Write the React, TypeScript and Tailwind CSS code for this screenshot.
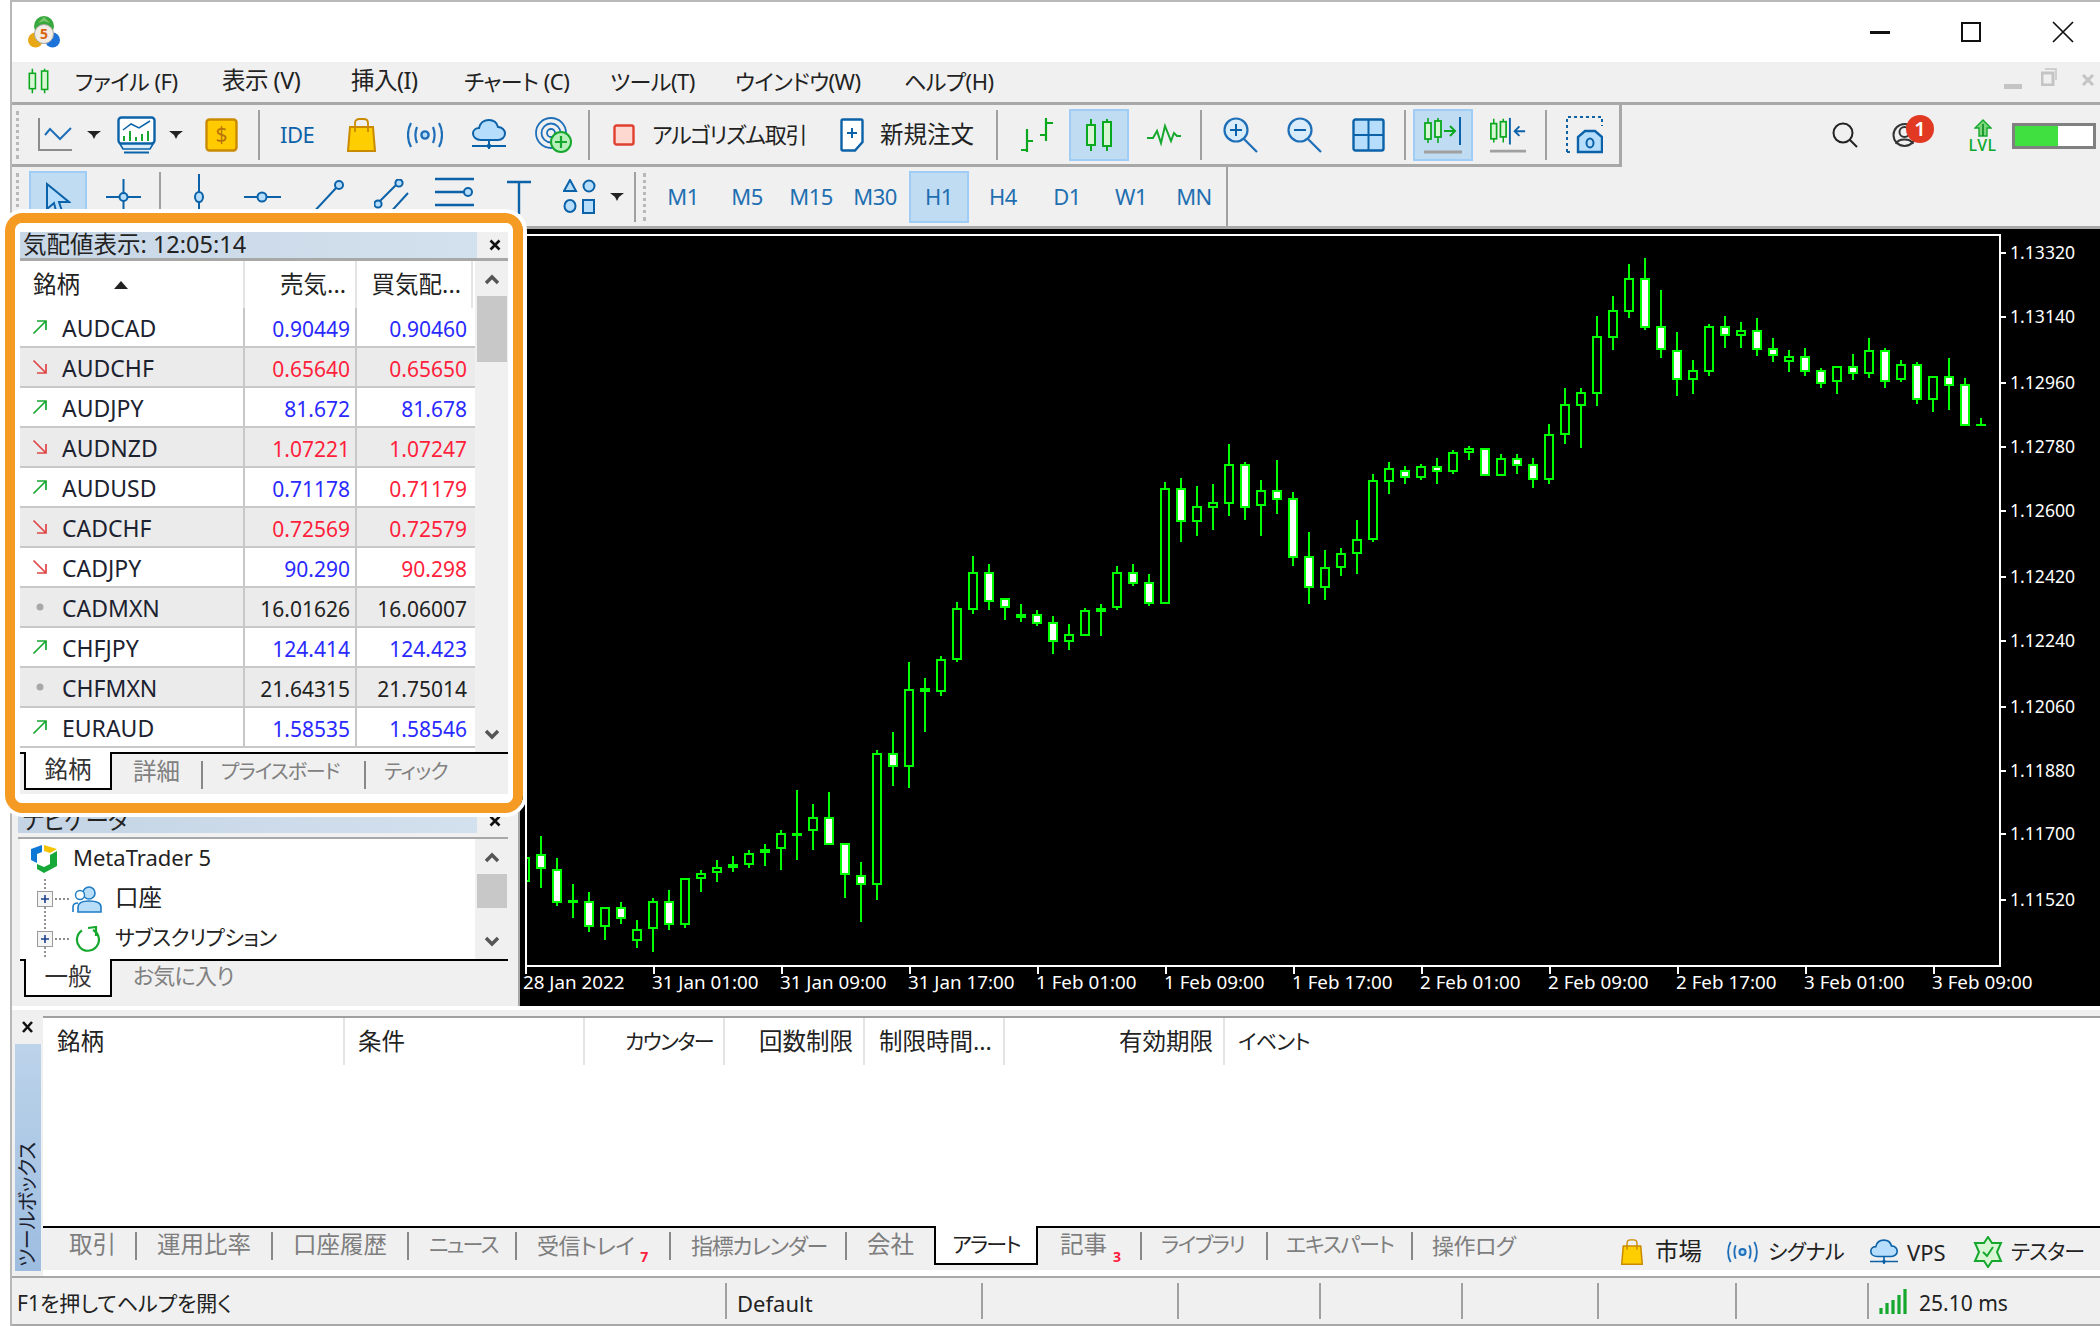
import React from "react";

const GREEN = "#16a82e";

type C = [number, number, number, number, string];
// wick top, wick bottom, body top, body bottom, type — sampled positions
const seg9: C[] = [
  [470,545,470,545,"h"],[408,563,463,508,"w"],[475,617,506,610,"w"],[552,653,601,610,"f"],[577,695,602,682,"w"],
  [620,719,620,682,"h"],[606,671,620,657,"w"],[660,743,686,724,"h"],[595,755,602,687,"h"],[570,690,602,676,"w"],
  [535,683,535,676,"h"],[510,575,518,538,"h"],[480,545,500,520,"h"],[468,515,492,503,"f"],[450,503,458,496,"h"],
  [432,497,446,460,"h"],[390,510,398,448,"h"],[270,480,398,401,"f"],[312,450,350,394,"h"],[276,436,350,436,"w"],
  [428,593,428,526,"w"],[486,665,524,556,"w"],[150,600,158,556,"h"],[96,258,158,202,"w"],
];
const seg7: C[] = [
  [1278,1398,1286,1385,"h"],[1116,1296,1135,1289,"h"],[978,1152,1027,1139,"h"],[1002,1140,1027,1115,"w"],[1105,1170,1105,1133,"w"],
  [1122,1176,1152,1164,"f"],[1140,1188,1152,1182,"w"],[1158,1272,1176,1236,"w"],[1182,1260,1212,1236,"h"],[1134,1218,1140,1217,"h"],
  [1122,1218,1134,1146,"f"],[1008,1140,1027,1133,"h"],[1002,1068,1027,1062,"w"],[1032,1128,1056,1122,"w"],[756,1122,775,1122,"h"],
  [744,936,775,876,"w"],[768,918,829,876,"h"],[762,900,817,833,"h"],[642,858,703,822,"h"],[696,870,703,834,"w"],
  [750,918,781,827,"h"],[690,852,781,810,"w"],[786,1008,805,984,"w"],[906,1122,979,1074,"w"],
];
const seg8: C[] = [
  [960,1110,1010,1073,"h"],[954,1038,968,1013,"h"],[870,1032,926,971,"h"],[732,936,751,930,"h"],[696,792,715,755,"h"],
  [708,762,721,743,"w"],[702,750,709,743,"h"],[684,762,709,725,"w"],[660,732,667,725,"h"],[648,690,655,670,"h"],
  [655,738,655,737,"w"],[672,738,685,737,"h"],[672,732,685,707,"w"],[684,774,703,749,"w"],[582,762,613,749,"h"],
  [474,642,523,616,"h"],[474,654,487,527,"h"],[258,528,319,491,"h"],[198,360,241,323,"h"],[102,264,145,245,"h"],
  [84,300,145,293,"w"],[180,384,289,359,"w"],[306,498,361,449,"w"],[390,492,421,449,"h"],[282,438,289,425,"h"],
  [258,354,289,317,"w"],[276,354,301,317,"h"],[264,378,301,359,"w"],[324,396,355,377,"w"],[360,426,379,395,"h"],
  [354,438,379,425,"w"],[414,474,421,461,"w"],[409,492,409,455,"h"],[372,450,409,431,"w"],[324,444,361,431,"h"],
  [354,474,361,455,"w"],[390,456,403,449,"h"],[396,522,403,509,"w"],[439,546,439,509,"h"],[384,540,439,467,"w"],
  [444,588,463,587,"w"],
];

function Candle({ x, c, base }: { x: number; c: C; base: number }) {
  const y = (p: number) => Math.round(base + p / 3);
  const [wt, wb, bt, bb, t] = c;
  const top = y(bt);
  const h = Math.max(y(bb) - top, 3);
  return (
    <g>
      <rect x={x - 1} y={y(wt)} width={2} height={y(wb) - y(wt)} fill="#00ff00" />
      <rect x={x - 5} y={top} width={10} height={h} fill="#00ff00" />
      {t !== "f" && h > 4 && (
        <rect x={x - 3} y={top + 2} width={6} height={h - 4} fill={t === "w" ? "#ffffff" : "#000000"} />
      )}
    </g>
  );
}

const priceLabels: [string, number][] = [
  ["1.13320", 253],["1.13140", 317],["1.12960", 383],["1.12780", 447],["1.12600", 511],["1.12420", 577],
  ["1.12240", 641],["1.12060", 707],["1.11880", 771],["1.11700", 834],["1.11520", 900],
];
const timeLabels = ["28 Jan 2022","31 Jan 01:00","31 Jan 09:00","31 Jan 17:00","1 Feb 01:00","1 Feb 09:00","1 Feb 17:00","2 Feb 01:00","2 Feb 09:00","2 Feb 17:00","3 Feb 01:00","3 Feb 09:00"];

function Chart() {
  return (
    <svg viewBox="520 229 1580 777" width={1580} height={777} className="block shrink-0 bg-black">
      <g shapeRendering="crispEdges">
        {seg9.map((c, i) => <Candle key={i} x={525 + 16 * i} c={c} base={700} />)}
        <rect x={908} y={662} width={2} height={126} fill="#00ff00" />
        <rect x={904} y={689} width={10} height={78} fill="#00ff00" />
        <rect x={906} y={691} width={6} height={74} fill="#000" />
        <rect x={924} y={678} width={2} height={54} fill="#00ff00" />
        <rect x={920} y={688} width={10} height={4} fill="#00ff00" />
        {seg7.map((c, i) => <Candle key={i} x={941 + 16 * i} c={c} base={230} />)}
        {seg8.map((c, i) => <Candle key={i} x={1325 + 16 * i} c={c} base={230} />)}
        <rect x={1980} y={418} width={2} height={7} fill="#00ff00" />
        <rect x={1976} y={424} width={10} height={2} fill="#00ff00" />
        <rect x={520} y={234} width={5} height={740} fill="#000" />
        <rect x={525} y={234} width={1476} height={2} fill="#fff" />
        <rect x={525} y={234} width={2} height={733} fill="#fff" />
        <rect x={1999} y={234} width={2} height={733} fill="#fff" />
        <rect x={525} y={965} width={1476} height={2} fill="#fff" />
        {priceLabels.map(([, y]) => <rect key={y} x={2001} y={y - 1} width={5} height={2} fill="#fff" />)}
        {timeLabels.map((_, i) => <rect key={i} x={525 + 128 * i} y={967} width={2} height={7} fill="#fff" />)}
      </g>
      <g fill="#ffffff">
        {priceLabels.map(([t, y]) => <text key={t} x={2010} y={y + 6} fontSize={17.6}>{t}</text>)}
        {timeLabels.map((t, i) => <text key={t} x={i === 0 ? 523 : 652 + 128 * (i - 1)} y={989} fontSize={18.8}>{t}</text>)}
      </g>
    </svg>
  );
}

function Logo() {
  return (
    <svg width={32} height={33} viewBox="0 0 32 33">
      <circle cx={16} cy={10} r={10} fill="#3aa83c" />
      <path d="M16 1L22 7L16 5L10 7Z" fill="#7bc96f" />
      <circle cx={7.5} cy={24} r={7.5} fill="#e8a815" />
      <circle cx={24.5} cy={24} r={7.5} fill="#1b72d8" />
      <circle cx={16} cy={18} r={9.5} fill="#f1ece4" stroke="#a8a8a8" strokeWidth={1} />
      <text x={16} y={23} textAnchor="middle" fontSize={14} fontWeight={700} fill="#d9660f">5</text>
    </svg>
  );
}

function Grip() {
  return <div className="w-[3px] h-[48px] ml-[4px] shrink-0 border-l-[3px] border-dotted border-[#b8b8b8]" />;
}
function Sep({ cls }: { cls: string }) {
  return <div className={`w-[2px] h-[50px] shrink-0 bg-[#a0a0a0] ${cls}`} />;
}
function Caret({ cls }: { cls: string }) {
  return (
    <svg width={14} height={10} viewBox="0 0 14 10" className={`shrink-0 ${cls}`}>
      <path d="M0 1H14L9 5L7 9L5 5Z" fill="#222" />
    </svg>
  );
}

const Candles = ({ w = 30, h = 34 }: { w?: number; h?: number }) => (
  <svg width={w} height={h} viewBox="0 0 30 34" className="shrink-0">
    <path d="M7 1V33M23 1V33" stroke="#0aa81e" strokeWidth={2} />
    <rect x={3} y={7} width={8} height={20} fill="#d8f5d4" stroke="#0aa81e" strokeWidth={2} />
    <rect x={19} y={4} width={8} height={24} fill="#d8f5d4" stroke="#0aa81e" strokeWidth={2} />
  </svg>
);

function UpDot({ d }: { d: string }) {
  if (d === "u")
    return (
      <svg width={16} height={16} viewBox="0 0 16 16" className="shrink-0">
        <path d="M1.5 14.5L14 2M5 2H14V11" stroke="#16a82e" strokeWidth={1.7} fill="none" />
      </svg>
    );
  if (d === "d")
    return (
      <svg width={16} height={16} viewBox="0 0 16 16" className="shrink-0">
        <path d="M1.5 1.5L14 14M5 14H14V5" stroke="#e04646" strokeWidth={1.7} fill="none" />
      </svg>
    );
  return (
    <svg width={16} height={16} viewBox="0 0 16 16" className="shrink-0">
      <circle cx={8} cy={8} r={3.5} fill="#a8a8a8" />
    </svg>
  );
}

const Chevron = ({ down }: { down?: boolean }) => (
  <svg width={16} height={12} viewBox="0 0 16 12">
    <path d={down ? "M2 2L8 8L14 2" : "M2 10L8 4L14 10"} stroke="#555" strokeWidth={3.4} fill="none" />
  </svg>
);

const B = "#2a2aff";
const R = "#ff1f3d";
const K = "#222222";
const rows = [
  ["u","AUDCAD","0.90449","0.90460",B,B],
  ["d","AUDCHF","0.65640","0.65650",R,R],
  ["u","AUDJPY","81.672","81.678",B,B],
  ["d","AUDNZD","1.07221","1.07247",R,R],
  ["u","AUDUSD","0.71178","0.71179",B,R],
  ["d","CADCHF","0.72569","0.72579",R,R],
  ["d","CADJPY","90.290","90.298",B,R],
  ["n","CADMXN","16.01626","16.06007",K,K],
  ["u","CHFJPY","124.414","124.423",B,B],
  ["n","CHFMXN","21.64315","21.75014",K,K],
  ["u","EURAUD","1.58535","1.58546",B,B],
];

function PanelClose() {
  return (
    <div className="w-[26px] ml-[5px] flex justify-center">
      <svg width={12} height={12} viewBox="0 0 12 12">
        <path d="M1.5 1.5L10.5 10.5M10.5 1.5L1.5 10.5" stroke="#111" strokeWidth={2.6} />
      </svg>
    </div>
  );
}

function MarketWatch() {
  return (
    <div className="ml-[8px] w-[488px] shrink-0 pt-[3px]">
      <div className="flex h-[26px] items-center">
        <div className="w-[462px] h-full flex items-center pl-[3px] bg-gradient-to-r from-[#c8d7e6] to-[#d3e0ee] text-[23.5px] leading-none text-[#222] whitespace-nowrap">
          気配値表示: 12:05:14
        </div>
        <PanelClose />
      </div>
      <div className="h-[3px] bg-[#a8a8a8]" />
      <div className="flex h-[491px] bg-white">
        <div className="w-[455px]">
          <div className="grid grid-cols-[225px_112px_116px] h-[47px] text-[23.5px] text-[#222]">
            <div className="flex items-center pl-[13px] border-r-2 border-[#e4e4e4]">
              銘柄
              <svg width={14} height={8} viewBox="0 0 14 8" className="ml-[34px]"><path d="M0 8H14L7 0Z" fill="#222" /></svg>
            </div>
            <div className="flex items-center justify-end pr-[9px] border-r-2 border-[#e4e4e4]">売気...</div>
            <div className="flex items-center justify-end pr-[10px] border-r-2 border-[#e4e4e4]">買気配...</div>
          </div>
          {rows.map((r, i) => (
            <div
              key={r[1]}
              className={`grid grid-cols-[225px_112px_116px] h-[40px] border-b-2 border-[#c8c8c8] ${i % 2 ? "bg-[#ebebeb]" : "bg-white"}`}
            >
              <div className="flex items-center pl-[12px] border-r-2 border-[#c8c8c8] text-[23px] text-[#1c2230]">
                <UpDot d={r[0]} />
                <span className="ml-[14px] pt-[3px]">{r[1]}</span>
              </div>
              <div className="flex items-center justify-end pr-[5px] pt-[6px] border-r-2 border-[#c8c8c8] text-[21px]">
                <span style={{ color: r[4] }}>{r[2]}</span>
              </div>
              <div className="flex items-center justify-end pr-[6px] pt-[6px] text-[21px]">
                <span style={{ color: r[5] }}>{r[3]}</span>
              </div>
            </div>
          ))}
        </div>
        <div className="w-[33px] bg-[#f0f0f0] flex flex-col items-center">
          <div className="h-[35px] flex items-center justify-center"><Chevron /></div>
          <div className="w-[30px] h-[66px] bg-[#c8c8c8]" />
          <div className="mt-auto h-[42px] flex items-start pt-[19px]"><Chevron down /></div>
        </div>
      </div>
      <div className="h-[2px] bg-black" />
      <div className="flex h-[41px] bg-[#f0f0f0] text-[23.5px] text-[#808080]">
        <div className="ml-[4px] w-[88px] h-[38px] -mt-[2px] bg-white border-2 border-t-0 border-black flex items-center justify-center text-[#333]">銘柄</div>
        <div className="flex items-center">
          <span className="w-[46px] ml-[21px] -mt-[6px] whitespace-nowrap">詳細</span>
          <span className="w-[2px] h-[28px] bg-[#888] ml-[22px]" />
          <span className="w-[124px] ml-[18px] -mt-[6px] whitespace-nowrap text-[20px] tracking-[-1px]">プライスボード</span>
          <span className="w-[2px] h-[28px] bg-[#888] ml-[19px]" />
          <span className="ml-[18px] -mt-[6px] text-[20px] tracking-[-0.5px]">ティック</span>
        </div>
      </div>
    </div>
  );
}

function Navigator() {
  return (
    <div className="mt-[13px] ml-[6px] w-[490px] shrink-0">
      <div className="flex h-[25px] items-center">
        <div className="w-[464px] h-full pl-[4px] flex items-center bg-gradient-to-r from-[#c4d4e4] to-[#d3e0ee] text-[23.5px] leading-none tracking-[-1px] text-[#222]">ナビゲータ</div>
        <PanelClose />
      </div>
      <div className="h-[4px]" />
      <div className="h-[2px] bg-[#a8a8a8]" />
      <div className="flex h-[120px] bg-white ml-[2px]">
        <div className="flex-1 text-[#222]">
          <div className="h-[40px] flex items-center pl-[10px]">
            <svg width={28} height={30} viewBox="0 0 28 30" className="shrink-0">
              <path d="M1 5L12 1V8L7 10V19L1 16Z" fill="#0e78d6" />
              <path d="M14 1L27 5L20 9L14 7Z" fill="#f5c400" />
              <path d="M27 7V22L14 29L7 25V20L14 23L20 20V11Z" fill="#17a83a" />
            </svg>
            <span className="ml-[15px] pb-[4px] text-[22px]">MetaTrader 5</span>
          </div>
          <div className="h-[40px] flex items-center pl-[17px]">
            <TreeNode />
            <svg width={30} height={28} viewBox="0 0 30 28" className="ml-[3px] shrink-0">
              <circle cx={17} cy={8} r={6} fill="#b8ddf8" stroke="#1f7cc4" strokeWidth={1.6} />
              <path d="M6 27V22C6 17 11 16 17 16C24 16 29 17 29 22V27Z" fill="#b8ddf8" stroke="#1f7cc4" strokeWidth={1.6} />
              <circle cx={8} cy={10} r={4.5} fill="#fff" stroke="#1f7cc4" strokeWidth={1.4} />
              <path d="M1 27V22C1 19 3 18 6 18" fill="none" stroke="#1f7cc4" strokeWidth={1.6} />
            </svg>
            <span className="ml-[13px] pb-[3px] text-[23.5px]">口座</span>
          </div>
          <div className="h-[40px] flex items-center pl-[17px]">
            <TreeNode />
            <svg width={26} height={26} viewBox="0 0 26 26" className="ml-[5px] shrink-0">
              <path d="M8 4.5A11 11 0 1 0 19 4" fill="none" stroke="#16a82e" strokeWidth={2.2} />
              <path d="M14 2L22 1V10" fill="none" stroke="#16a82e" strokeWidth={2.2} />
            </svg>
            <span className="ml-[15px] pb-[3px] text-[21px] tracking-[-0.5px] whitespace-nowrap">サブスクリプション</span>
          </div>
        </div>
        <div className="w-[33px] bg-[#f0f0f0] flex flex-col items-center">
          <div className="h-[35px] flex items-center justify-center"><Chevron /></div>
          <div className="w-[30px] h-[34px] bg-[#c8c8c8]" />
          <div className="mt-auto h-[34px] flex items-center"><Chevron down /></div>
        </div>
      </div>
      <div className="h-[2px] bg-black ml-[2px]" />
      <div className="flex h-[41px] bg-[#f0f0f0] text-[23.5px] text-[#808080]">
        <div className="ml-[6px] w-[88px] h-[38px] -mt-[2px] bg-white border-2 border-t-0 border-black flex items-center justify-center text-[#333]">一般</div>
        <div className="flex items-center ml-[21px] pb-[12px] text-[22px] tracking-[-0.8px]">お気に入り</div>
      </div>
    </div>
  );
}

function TreeNode() {
  return (
    <svg width={32} height={40} viewBox="0 0 32 40" className="shrink-0">
      <path d="M8 0V12M8 28V40" stroke="#666" strokeWidth={1.4} strokeDasharray="2 2" />
      <path d="M18 20H32" stroke="#666" strokeWidth={1.4} strokeDasharray="2 2" />
      <rect x={0.5} y={12.5} width={15} height={15} fill="#f4f4f4" stroke="#9a9a9a" />
      <path d="M4 20H12M8 16V24" stroke="#1c3f8f" strokeWidth={1.6} />
    </svg>
  );
}

const tabs = [
  { l: "取引", c: "w-[92px] pl-[26px] text-[23.5px]" },
  { l: "運用比率", c: "w-[134px] pl-[20px] text-[23.5px]" },
  { l: "口座履歴", c: "w-[134px] pl-[20px] text-[23.5px]" },
  { l: "ニュース", c: "w-[106px] pl-[20px] tracking-[-1.7px]" },
  { l: "受信トレイ", c: "w-[152px] pl-[20px] text-[22px] tracking-[-0.5px]", n: "7" },
  { l: "指標カレンダー", c: "w-[174px] pl-[20px] text-[22px] tracking-[-1.3px]" },
];
const tabs2 = [
  { l: "記事", c: "w-[102px] pl-[22px] text-[23.5px]", n: "3" },
  { l: "ライブラリ", c: "w-[124px] pl-[19px] tracking-[-1.4px]" },
  { l: "エキスパート", c: "w-[143px] pl-[18px] tracking-[-1.2px]" },
  { l: "操作ログ", c: "w-[208px] pl-[19px] text-[22px] tracking-[-0.5px]", last: true },
];

function Tab({ t }: { t: { l: string; c: string; n?: string; last?: boolean } }) {
  return (
    <>
      <div className={`flex items-center h-full pb-[8px] whitespace-nowrap shrink-0 ${t.c}`}>
        {t.l}
        {t.n && <span className="relative top-[11px] ml-[6px] text-[14px] font-bold text-[#ff2040] tracking-normal">{t.n}</span>}
      </div>
      {!t.last && <div className="w-[2px] h-[28px] -mt-[6px] bg-[#888] shrink-0" />}
    </>
  );
}

const Bag = ({ w, h }: { w: number; h: number }) => (
  <svg width={w} height={h} viewBox="0 0 29 34" className="shrink-0">
    <path d="M3 9H26L28 33H1Z" fill="#ffce00" stroke="#c98a00" strokeWidth={2} />
    <path d="M8 14V5C8 2 10 1 12.5 1H16.5C19 1 21 2 21 5V14" fill="none" stroke="#c98a00" strokeWidth={1.8} />
  </svg>
);
const Signal = ({ w, h }: { w: number; h: number }) => (
  <svg width={w} height={h} viewBox="0 0 36 26" className="shrink-0" fill="none" stroke="#1f6fb8" strokeWidth={2.2}>
    <circle cx={18} cy={13} r={3.6} fill="#b6defc" strokeWidth={2.4} />
    <path d="M10 5C8 10 8 16 10 21M26 5C28 10 28 16 26 21M4 1C0 8 0 18 4 25M32 1C36 8 36 18 32 25" />
  </svg>
);
const Cloud = ({ w, h }: { w: number; h: number }) => (
  <svg width={w} height={h} viewBox="0 0 34 31" className="shrink-0">
    <path d="M9 21C4 21 1 18 1 14.5C1 11 4 9 7 9C8 4 12 1 17 1C22 1 25 4 26 8C30 8 33 11 33 14.5C33 18 30 21 26 21Z" fill="#b6defc" stroke="#0b62a8" strokeWidth={2} />
    <path d="M17 21V30M0 27H34" stroke="#0b62a8" strokeWidth={2} />
    <circle cx={17} cy={27} r={2.2} fill="#0b62a8" />
  </svg>
);

export default function App() {
  return (
    <div className="relative w-[2100px] h-[1326px] overflow-hidden bg-white font-['Noto_Sans','Noto_Sans_CJK_JP',sans-serif] [font-feature-settings:'palt']">
      <div className="ml-[10px] w-[2090px] h-[1326px] border-l-2 border-t-2 border-[#b8b8b8] flex flex-col">
        {/* Title */}
        <div className="h-[60px] flex items-center shrink-0 bg-white">
          <div className="ml-[16px]"><Logo /></div>
          <svg width={20} height={3} className="ml-[1810px]"><rect width={20} height={3} fill="#111" /></svg>
          <svg width={20} height={20} viewBox="0 0 20 20" className="ml-[71px]"><rect x={1} y={1} width={18} height={18} fill="none" stroke="#111" strokeWidth={2} /></svg>
          <svg width={22} height={22} viewBox="0 0 22 22" className="ml-[71px]"><path d="M1 1L21 21M21 1L1 21" stroke="#111" strokeWidth={1.7} /></svg>
        </div>
        {/* Menu */}
        <div className="h-[43px] pb-[2px] shrink-0 bg-[#f0f0f0] border-b-[3px] border-[#a8a8a8] flex items-center text-[22px] text-[#222] tracking-[-0.5px]">
          <div className="ml-[15px] w-[23px] shrink-0"><Candles w={23} h={30} /></div>
          <span className="ml-[25px] w-[147px] shrink-0 whitespace-nowrap">ファイル (F)</span>
          <span className="w-[129px] shrink-0 whitespace-nowrap text-[23.5px]">表示 (V)</span>
          <span className="w-[113px] shrink-0 whitespace-nowrap text-[23.5px]">挿入(I)</span>
          <span className="w-[146px] shrink-0 whitespace-nowrap">チャート (C)</span>
          <span className="w-[125px] shrink-0 whitespace-nowrap">ツール(T)</span>
          <span className="w-[169px] shrink-0 whitespace-nowrap">ウインドウ(W)</span>
          <span className="w-[100px] shrink-0 whitespace-nowrap">ヘルプ(H)</span>
          <svg width={18} height={6} className="ml-[1000px] mt-[12px]"><rect width={18} height={5} fill="#c4c4c4" /></svg>
          <svg width={16} height={18} viewBox="0 0 16 18" className="ml-[19px] -mt-[8px]"><rect x={1} y={5} width={11} height={12} fill="none" stroke="#c4c4c4" strokeWidth={3} /><path d="M4 1H15V12" fill="none" stroke="#c4c4c4" strokeWidth={1.5} /></svg>
          <svg width={14} height={14} viewBox="0 0 14 14" className="ml-[24px] -mt-[2px]"><path d="M2 2L12 12M12 2L2 12" stroke="#c4c4c4" strokeWidth={3} /></svg>
        </div>
        {/* Toolbar 1 */}
        <div className="h-[62px] shrink-0 bg-[#f0f0f0] flex">
          <div className="w-[1610px] h-full shrink-0 border-r-[3px] border-b-[3px] border-[#a8a8a8] flex items-center">
            <Grip />
            <svg width={34} height={33} viewBox="0 0 34 33" className="ml-[19px] shrink-0">
              <path d="M1 0V32H34" fill="none" stroke="#8c8c8c" strokeWidth={2} />
              <path d="M7 17L12 11L22 21L33 10" fill="none" stroke="#1f6fb8" strokeWidth={2} />
            </svg>
            <Caret cls="ml-[15px]" />
            <svg width={39} height={38} viewBox="0 0 39 38" className="ml-[16px] shrink-0">
              <rect x={1.5} y={1.5} width={36} height={26} rx={3} fill="#fff" stroke="#0b62a8" strokeWidth={2.4} />
              <path d="M6 14L14 8L22 12L33 5" fill="none" stroke="#0b62a8" strokeWidth={1.5} />
              <path d="M7 25V20M13 25V15M19 25V21M25 25V18M31 25V15" stroke="#16a82e" strokeWidth={2} />
              <path d="M3 28H36L33 33H6Z" fill="#d8ecfb" stroke="#0b62a8" strokeWidth={1.6} />
              <path d="M7 36.5H32" stroke="#0b62a8" strokeWidth={2} />
            </svg>
            <Caret cls="ml-[13px]" />
            <svg width={33} height={34} viewBox="0 0 33 34" className="ml-[22px] shrink-0">
              <rect x={1.5} y={1.5} width={30} height={31} rx={3} fill="#ffcb00" stroke="#c98a00" strokeWidth={2.4} />
              <text x={16.5} y={24} textAnchor="middle" fontSize={21} fill="#b8740a">$</text>
            </svg>
            <Sep cls="ml-[20px]" />
            <span className="ml-[20px] w-[35px] shrink-0 text-[22px] text-[#0b62a8] tracking-[-0.5px]">IDE</span>
            <div className="ml-[32px]"><Bag w={29} h={34} /></div>
            <div className="ml-[31px]"><Signal w={36} h={26} /></div>
            <div className="ml-[29px]"><Cloud w={34} h={31} /></div>
            <svg width={37} height={36} viewBox="0 0 37 36" className="ml-[29px] shrink-0">
              <g fill="none" stroke="#1f6fb8" strokeWidth={1.8}>
                <circle cx={16} cy={16} r={15} />
                <circle cx={16} cy={16} r={9.5} />
                <circle cx={16} cy={16} r={4} />
              </g>
              <circle cx={26} cy={25} r={10} fill="#b7f0bb" stroke="#16a82e" strokeWidth={2} />
              <path d="M20 25H32M26 19V31" stroke="#16a82e" strokeWidth={2.2} />
            </svg>
            <Sep cls="ml-[16px]" />
            <svg width={22} height={22} viewBox="0 0 22 22" className="ml-[23px] shrink-0"><rect x={1.5} y={1.5} width={19} height={19} rx={2} fill="#fcd8d0" stroke="#e0402f" strokeWidth={2.4} /></svg>
            <span className="ml-[17px] w-[152px] shrink-0 text-[22px] text-[#222] whitespace-nowrap tracking-[-1.2px]">アルゴリズム取引</span>
            <svg width={24} height={34} viewBox="0 0 24 34" className="ml-[36px] shrink-0">
              <path d="M3 1.5H21C22 1.5 22.5 2 22.5 3V24L15 32.5H3C2 32.5 1.5 32 1.5 31V3C1.5 2 2 1.5 3 1.5Z" fill="#fff" stroke="#0b62a8" strokeWidth={2.4} />
              <path d="M7 15H17M12 10V20" stroke="#0b62a8" strokeWidth={2} />
            </svg>
            <span className="ml-[16px] w-[95px] shrink-0 text-[23.5px] text-[#222] whitespace-nowrap">新規注文</span>
            <Sep cls="ml-[21px]" />
            <svg width={37} height={36} viewBox="0 0 37 36" className="ml-[20px] shrink-0">
              <path d="M9 12V35M9 24H15M9 33H3M28 1V24M28 6H35M28 18H22" stroke="#0aa81e" strokeWidth={2.2} fill="none" />
            </svg>
            <div className="ml-[14px] w-[60px] h-[52px] shrink-0 bg-[#c0dcf3] border-2 border-[#a0cdf5] flex items-center justify-center"><Candles /></div>
            <svg width={34} height={24} viewBox="0 0 34 24" className="ml-[18px] shrink-0">
              <path d="M0 15H6L10 8L14 20L18 3L24 18L27 10L30 13H34" fill="none" stroke="#16a82e" strokeWidth={2} />
            </svg>
            <Sep cls="ml-[19px]" />
            <svg width={35} height={36} viewBox="0 0 35 36" className="ml-[21px] shrink-0">
              <circle cx={13} cy={13} r={11.5} fill="#d8ecfb" stroke="#1f6fb8" strokeWidth={2.2} />
              <path d="M21 22L34 35" stroke="#1f6fb8" strokeWidth={2.2} />
              <path d="M7 13H19M13 7V19" stroke="#0b62a8" strokeWidth={2} />
            </svg>
            <svg width={35} height={36} viewBox="0 0 35 36" className="ml-[29px] shrink-0">
              <circle cx={13} cy={13} r={11.5} fill="#d8ecfb" stroke="#1f6fb8" strokeWidth={2.2} />
              <path d="M21 22L34 35" stroke="#1f6fb8" strokeWidth={2.2} />
              <path d="M7 13H19" stroke="#0b62a8" strokeWidth={2} />
            </svg>
            <svg width={33} height={34} viewBox="0 0 33 34" className="ml-[30px] shrink-0">
              <rect x={1.5} y={1.5} width={30} height={31} rx={2} fill="#b6defc" stroke="#0b62a8" strokeWidth={2.4} />
              <path d="M16.5 2V32M2 17H31" stroke="#0b62a8" strokeWidth={2} />
            </svg>
            <Sep cls="ml-[19px]" />
            <div className="ml-[7px] w-[60px] h-[52px] shrink-0 bg-[#c0dcf3] border-2 border-[#a0cdf5] flex items-center justify-center">
              <svg width={40} height={40} viewBox="0 0 40 40">
                <path d="M5 3V28M15 3V28" stroke="#0aa81e" strokeWidth={1.6} />
                <rect x={2} y={8} width={6} height={16} fill="#d8f5d4" stroke="#0aa81e" strokeWidth={1.8} />
                <rect x={12} y={6} width={6} height={16} fill="#d8f5d4" stroke="#0aa81e" strokeWidth={1.8} />
                <path d="M21 16H32M27 11L32 16L27 21" fill="none" stroke="#0aa81e" strokeWidth={2} />
                <path d="M37 2V30" stroke="#0b62a8" strokeWidth={2} />
                <path d="M1 37H39" stroke="#a0a0a0" strokeWidth={3} />
              </svg>
            </div>
            <svg width={38} height={40} viewBox="0 0 40 40" className="ml-[16px] shrink-0">
              <path d="M5 3V28M15 3V28" stroke="#0aa81e" strokeWidth={1.6} />
              <rect x={2} y={8} width={6} height={16} fill="#d8f5d4" stroke="#0aa81e" strokeWidth={1.8} />
              <rect x={12} y={6} width={6} height={16} fill="#d8f5d4" stroke="#0aa81e" strokeWidth={1.8} />
              <path d="M22 2V30" stroke="#0b62a8" strokeWidth={2} />
              <path d="M38 16H27M32 11L27 16L32 21" fill="none" stroke="#0b62a8" strokeWidth={2} />
              <path d="M1 37H39" stroke="#a0a0a0" strokeWidth={3} />
            </svg>
            <Sep cls="ml-[18px]" />
            <svg width={37} height={38} viewBox="0 0 37 38" className="ml-[19px] shrink-0">
              <path d="M1 36V1H36V10M1 36H4" fill="none" stroke="#0b62a8" strokeWidth={2} strokeDasharray="3 3" />
              <path d="M12 36V21L19 15H29L36 21V36Z" fill="#b6defc" stroke="#0b62a8" strokeWidth={2.4} />
              <ellipse cx={24} cy={27} rx={3.5} ry={4.5} fill="none" stroke="#0b62a8" strokeWidth={2} />
            </svg>
          </div>
          <div className="flex items-center h-[60px] ml-[210px]">
            <svg width={26} height={26} viewBox="0 0 26 26" className="shrink-0">
              <circle cx={11} cy={11} r={9.5} fill="none" stroke="#222" strokeWidth={2} />
              <path d="M18 18L25 25" stroke="#222" strokeWidth={2} />
            </svg>
            <div className="relative ml-[34px] w-[25px] h-[26px] shrink-0">
              <svg width={25} height={26} viewBox="0 0 25 26">
                <circle cx={12.5} cy={13} r={11} fill="none" stroke="#333" strokeWidth={2} />
                <circle cx={12.5} cy={10} r={5} fill="none" stroke="#333" strokeWidth={2} />
                <path d="M4 22C6 16 19 16 21 22" fill="none" stroke="#333" strokeWidth={2} />
              </svg>
              <div className="absolute left-[14px] -top-[7px] w-[28px] h-[28px] rounded-full bg-[#e23a22] text-white text-[20px] font-semibold flex items-center justify-center">1</div>
            </div>
            <div className="ml-[53px] w-[25px] shrink-0 flex flex-col items-center text-[#0aa82a]">
              <svg width={18} height={18} viewBox="0 0 18 18">
                <path d="M9 1L17 9H13V17H5V9H1Z" fill="#7cd67c" stroke="#16a82e" strokeWidth={1.4} />
                <path d="M9 5V17" stroke="#0a8a20" strokeWidth={1.6} />
              </svg>
              <span className="text-[16px] leading-[14px] font-medium mt-[1px] tracking-[0.5px]">LVL</span>
            </div>
            <div className="ml-[17px] mt-[2px] w-[84px] h-[26px] shrink-0 border-[3px] border-[#808080] bg-white flex">
              <div className="w-[43px] h-full bg-[#40e040]" />
            </div>
          </div>
        </div>
        {/* Toolbar 2 */}
        <div className="h-[62px] shrink-0 bg-[#f0f0f0] border-b-[3px] border-[#a8a8a8] flex items-center">
          <Grip />
          <div className="ml-[10px] w-[58px] h-[52px] shrink-0 bg-[#c0dcf3] border-2 border-[#a0cdf5] flex items-start justify-center pt-[9px]">
            <svg width={26} height={34} viewBox="0 0 26 34"><path d="M2 2L24 20H14L18 32L12 33L9 21L2 27Z" fill="#b6defc" stroke="#0b62a8" strokeWidth={2} /></svg>
          </div>
          <svg width={35} height={36} viewBox="0 0 35 36" className="ml-[19px] shrink-0">
            <path d="M17.5 0V36M0 18H35" stroke="#0b62a8" strokeWidth={2} />
            <circle cx={17.5} cy={18} r={4} fill="#b6defc" stroke="#0b62a8" strokeWidth={2} />
          </svg>
          <Sep cls="ml-[18px]" />
          <svg width={14} height={46} viewBox="0 0 14 46" className="ml-[31px] shrink-0">
            <path d="M7 0V46" stroke="#0b62a8" strokeWidth={2} />
            <ellipse cx={7} cy={23} rx={4} ry={5} fill="#b6defc" stroke="#0b62a8" strokeWidth={2} />
          </svg>
          <svg width={37} height={14} viewBox="0 0 37 14" className="ml-[38px] shrink-0">
            <path d="M0 7H37" stroke="#0b62a8" strokeWidth={2} />
            <circle cx={18} cy={7} r={4.5} fill="#b6defc" stroke="#0b62a8" strokeWidth={2} />
          </svg>
          <svg width={36} height={36} viewBox="0 0 36 36" className="ml-[28px] shrink-0">
            <path d="M2 36L28 8" stroke="#0b62a8" strokeWidth={2} />
            <circle cx={30} cy={6} r={4} fill="#b6defc" stroke="#0b62a8" strokeWidth={2} />
          </svg>
          <svg width={36} height={36} viewBox="0 0 36 36" className="ml-[29px] shrink-0">
            <path d="M6 22L22 6M14 36L34 14" stroke="#0b62a8" strokeWidth={2} />
            <circle cx={25} cy={4} r={3.6} fill="#b6defc" stroke="#0b62a8" strokeWidth={2} />
            <circle cx={4} cy={25} r={3.6} fill="#b6defc" stroke="#0b62a8" strokeWidth={2} />
          </svg>
          <svg width={39} height={40} viewBox="0 0 39 40" className="ml-[25px] shrink-0">
            <path d="M0 2H39M0 15H30M0 28H39M0 39H6" stroke="#0b62a8" strokeWidth={2.4} />
            <circle cx={33} cy={15} r={4} fill="#b6defc" stroke="#0b62a8" strokeWidth={2} />
          </svg>
          <svg width={24} height={34} viewBox="0 0 24 34" className="ml-[33px] shrink-0"><path d="M0 2H24M12 2V34" stroke="#0b62a8" strokeWidth={2.4} /></svg>
          <svg width={33} height={36} viewBox="0 0 33 36" className="ml-[32px] shrink-0">
            <g fill="#b6defc" stroke="#0b62a8" strokeWidth={2}>
              <path d="M7 1L13 12H1Z" />
              <circle cx={26} cy={7} r={5.5} />
              <ellipse cx={7} cy={27} rx={5.5} ry={6} />
              <rect x={20} y={21} width={11} height={13} />
            </g>
          </svg>
          <Caret cls="ml-[14px]" />
          <Sep cls="ml-[10px]" />
          <div className="w-[3px] h-[48px] ml-[7px] shrink-0 border-l-[3px] border-dotted border-[#b8b8b8]" />
          <div className="flex ml-[5px] w-[577px] h-[59px] items-center border-r-2 border-[#a0a0a0] text-[22px] text-[#1f6fb0] tracking-[-0.5px]">
            <span className="w-[64px] text-center">M1</span>
            <span className="w-[64px] text-center">M5</span>
            <span className="w-[64px] text-center">M15</span>
            <span className="w-[64px] text-center">M30</span>
            <span className="w-[60px] mx-[2px] h-[52px] flex items-center justify-center bg-[#c0dcf3] border-2 border-[#a0cdf5]">H1</span>
            <span className="w-[64px] text-center">H4</span>
            <span className="w-[64px] text-center">D1</span>
            <span className="w-[64px] text-center">W1</span>
            <span className="w-[62px] text-center">MN</span>
          </div>
        </div>
        {/* Main */}
        <div className="h-[777px] shrink-0 flex bg-black">
          <div className="w-[508px] shrink-0 bg-[#f0f0f0] border-r-2 border-[#a8a8a8] flex flex-col">
            <MarketWatch />
            <Navigator />
          </div>
          <Chart />
        </div>
        {/* Toolbox */}
        <div className="h-[270px] shrink-0 flex bg-[#f0f0f0] border-t-[4px] border-white">
          <div className="w-[31px] shrink-0 flex flex-col items-center">
            <div className="h-[34px] flex items-start pt-[10px]">
              <svg width={13} height={14} viewBox="0 0 13 14"><path d="M2 2L11 12M11 2L2 12" stroke="#111" strokeWidth={2.6} /></svg>
            </div>
            <div className="w-[26px] h-[227px] bg-gradient-to-b from-[#bcd3ea] to-[#9dbde0] flex items-end justify-center">
              <span className="[writing-mode:vertical-rl] [text-orientation:sideways] rotate-180 text-[20px] leading-[26px] text-[#1c2230] whitespace-nowrap pt-[4px] tracking-[-0.3px]">ツールボックス</span>
            </div>
          </div>
          <div className="flex-1 flex flex-col">
            <div className="h-[6px]" />
            <div className="h-[2px] bg-[#a0a0a0]" />
            <div className="h-[208px] bg-white text-[23.5px] text-[#222] whitespace-nowrap">
              <div className="flex h-[47px]">
                <div className="w-[302px] border-r-2 border-[#e4e4e4] pl-[14px] flex items-center">銘柄</div>
                <div className="w-[240px] border-r-2 border-[#e4e4e4] pl-[13px] flex items-center">条件</div>
                <div className="w-[140px] border-r-2 border-[#e4e4e4] pr-[10px] flex items-center justify-end text-[21px] tracking-[-1.6px]">カウンター</div>
                <div className="w-[140px] border-r-2 border-[#e4e4e4] pr-[10px] flex items-center justify-end">回数制限</div>
                <div className="w-[140px] border-r-2 border-[#e4e4e4] pl-[14px] flex items-center">制限時間...</div>
                <div className="w-[220px] border-r-2 border-[#e4e4e4] pr-[10px] flex items-center justify-end">有効期限</div>
                <div className="pl-[13px] flex items-center text-[21px] tracking-[-0.7px]">イベント</div>
              </div>
            </div>
            <div className="h-[2px] bg-black" />
            <div className="h-[42px] flex items-center text-[21px] text-[#7e7e7e]">
              {tabs.map((t) => <Tab key={t.l} t={t} />)}
              <div className="flex items-center h-full pb-[8px] w-[87px] pl-[20px] shrink-0 whitespace-nowrap text-[23.5px]">会社</div>
              <div className="w-[104px] h-[39px] self-start -mt-[2px] shrink-0 bg-white border-2 border-t-0 border-black flex items-center justify-center text-[#222] whitespace-nowrap tracking-[-1.8px]">アラート</div>
              {tabs2.map((t) => <Tab key={t.l} t={t} />)}
              <div className="mt-[6px] flex items-center text-[#222] whitespace-nowrap">
                <Bag w={22} h={26} />
                <span className="ml-[12px] w-[47px] text-[23.5px]">市場</span>
                <div className="ml-[25px]"><Signal w={31} h={22} /></div>
                <span className="ml-[10px] w-[73px] tracking-[-0.5px]">シグナル</span>
                <div className="ml-[29px]"><Cloud w={28} h={26} /></div>
                <span className="ml-[9px] w-[39px] text-[22px]">VPS</span>
                <svg width={30} height={32} viewBox="0 0 30 32" className="ml-[27px] shrink-0">
                  <path d="M15 1L19 7H28L24 16L28 25H19L15 31L11 25H2L6 16L2 7H11Z" fill="#d8f5d4" stroke="#16a82e" strokeWidth={2} />
                  <path d="M10 16L14 20L20 11" fill="none" stroke="#16a82e" strokeWidth={2} />
                </svg>
                <span className="ml-[8px] tracking-[-1px]">テスター</span>
              </div>
            </div>
            <div className="h-[6px] bg-white" />
          </div>
        </div>
        {/* Status */}
        <div className="h-[50px] shrink-0 bg-[#f0f0f0] border-t-2 border-b-2 border-[#a8a8a8] flex items-center text-[21px] text-[#222] whitespace-nowrap">
          <div className="w-[715px] h-[36px] border-r-2 border-[#a0a0a0] pl-[5px] pt-[6px] flex items-center">F1を押してヘルプを開く</div>
          <div className="w-[256px] h-[36px] border-r-2 border-[#a0a0a0] pl-[10px] pt-[4px] flex items-center text-[22px]">Default</div>
          <div className="w-[196px] h-[36px] border-r-2 border-[#a0a0a0]" />
          <div className="w-[142px] h-[36px] border-r-2 border-[#a0a0a0]" />
          <div className="w-[142px] h-[36px] border-r-2 border-[#a0a0a0]" />
          <div className="w-[136px] h-[36px] border-r-2 border-[#a0a0a0]" />
          <div className="w-[138px] h-[36px] border-r-2 border-[#a0a0a0]" />
          <div className="w-[132px] h-[36px] border-r-2 border-[#a0a0a0]" />
          <div className="pl-[10px] flex items-center">
            <svg width={29} height={26} viewBox="0 0 29 26"><path d="M2 26V20M8 26V15M14 26V12M20 26V7M26 26V1" stroke={GREEN} strokeWidth={3.2} /></svg>
            <span className="ml-[11px] pt-[6px]">25.10 ms</span>
          </div>
        </div>
      </div>
      {/* Orange annotation frame over the screenshot */}
      <div className="absolute left-[5px] top-[213px] w-[518px] h-[600px] rounded-[18px] border-[10px] border-[#f59a23] shadow-[0_0_0_4px_#ffffff] pointer-events-none">
        <div className="absolute inset-0 rounded-[7px] border-x-[5px] border-y-[9px] border-white" />
      </div>
    </div>
  );
}
